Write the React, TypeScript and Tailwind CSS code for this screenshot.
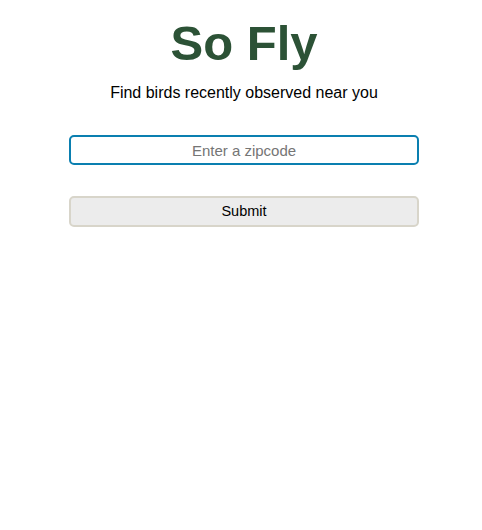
import React from "react";

const App: React.FC = () => {
  return (
    <div className="min-h-[530px] w-full bg-white font-['Liberation_Sans',Arial,sans-serif]">
      <div className="flex flex-col items-center pl-[6px] pt-[15px]">
        <h1 className="text-[49px] font-bold leading-[56px] text-[#2c5236]">So Fly</h1>
        <p className="mt-[13px] text-[16px] leading-[18px] text-black">
          Find birds recently observed near you
        </p>

        {/* Zipcode form */}
        <form className="mt-[33px] flex w-[350px] flex-col gap-[31px]" onSubmit={(e) => e.preventDefault()}>
          <input
            type="text"
            placeholder="Enter a zipcode"
            className="h-[30px] w-full rounded-[5px] border-2 border-[#0a7fb0] bg-white text-center text-[15px] text-black outline-none placeholder:text-[#757575]"
          />
          <button
            type="submit"
            className="h-[31px] w-full rounded-[5px] border-2 border-[#d8d5ca] bg-[#ececec] text-[14.5px] text-black"
          >
            Submit
          </button>
        </form>
      </div>
    </div>
  );
};

export default App;
